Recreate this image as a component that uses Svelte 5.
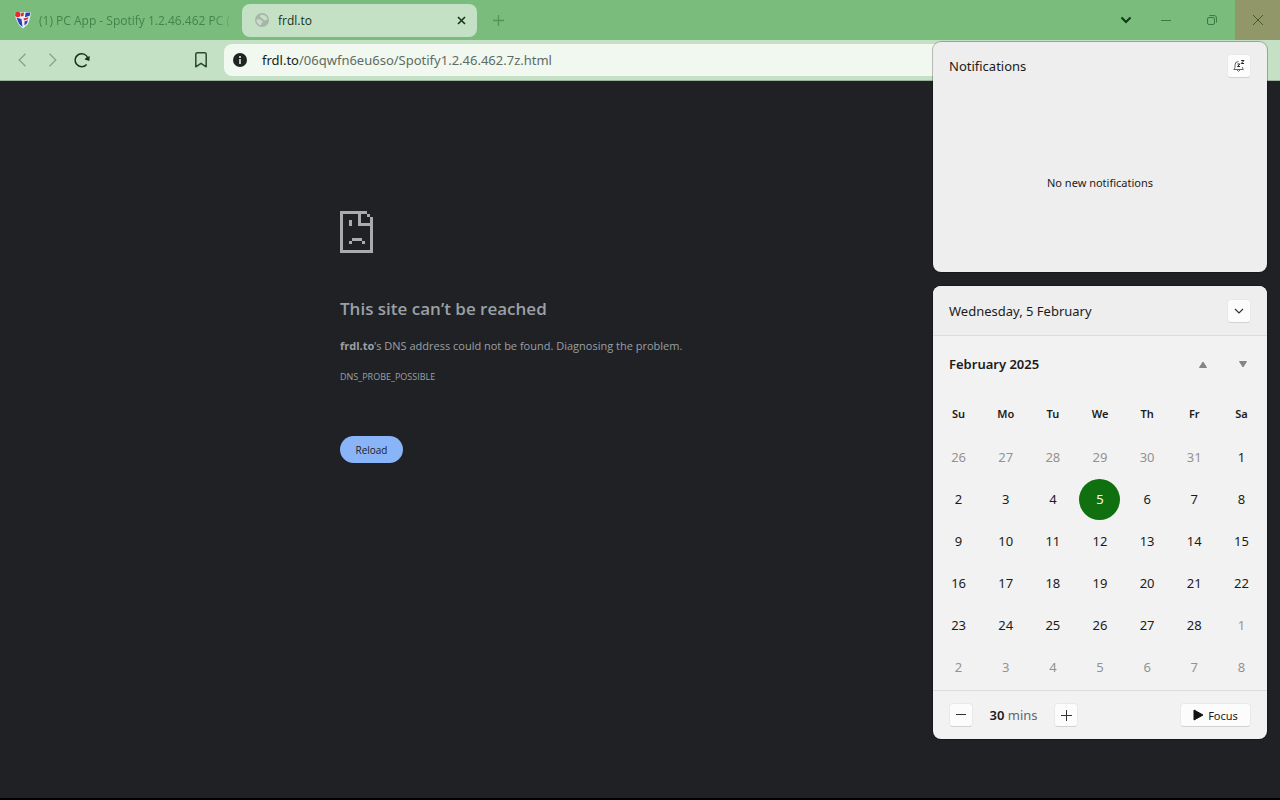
<script>
  const weekdays = ['Su', 'Mo', 'Tu', 'We', 'Th', 'Fr', 'Sa'];
  const days = [
    26, 27, 28, 29, 30, 31,
    ...Array.from({ length: 28 }, (_, i) => i + 1),
    1, 2, 3, 4, 5, 6, 7, 8
  ];
  const weeks = Array.from({ length: 6 }, (_, w) =>
    days.slice(w * 7, w * 7 + 7).map((day, d) => {
      const index = w * 7 + d;
      return { day, muted: index < 6 || index > 33, today: index === 10 };
    })
  );
  let minutes = $state(30);
</script>

<div class="browser">
  <header>
    <div class="tabs">
      <div class="tab">
        <svg width="18" height="18" viewBox="0 0 18 18" aria-hidden="true">
          <path d="M.5 2.500 3 .8 7 1.500 12 1l5 .3L16 7l-2 6-5 4.500L5 14 2 8z" fill="#eef1f8" />
          <circle cx="3.800" cy="3.500" r="2.700" fill="#e32b2b" />
          <path d="m7 2.200 3-.6-.5 3.400-2.500.5zM9.500 7.500l5-1.300-.8 2-3.700 1.300z" fill="#e32b2b" />
          <path d="m11.500 1.800 4.800-.3-.6 3.300-4.700 1.400zM2.500 6.800l5 1.200 1 8-3.300-3zM10.500 10.500l3.300-1.300-.8 3-2.500 2.300z" fill="#2440b8" />
        </svg>
        <a href="#spotify">(1) PC App - Spotify 1.2.46.462 PC (</a>
      </div>
      <div class="tab active">
        <svg width="14" height="14" viewBox="0 0 14 14" aria-hidden="true">
          <circle cx="7" cy="7" r="7" fill="#a9b4aa" />
          <path d="M1.500 6.500c2-.5 4 0 5 1 1.200.6 1.800 1.500.5 2.500-1 .5-.5 1.800-1.500 2.300C3 11.500 1.200 9.200 1.500 6.500zM5.500 2C8.500 1 11.500 3 12.500 5.500c.2 1.500-1.500 1-2 1.800C9.500 8.200 9 6.500 8 6 6.500 6 7 4.500 5.800 4.200 4.800 3.500 4.800 2.500 5.500 2z" fill="#c5dfc5" />
        </svg>
        <a href="#frdl">frdl.to</a>
        <button class="plain close" aria-label="Close tab">
          <svg width="9" height="9" viewBox="0 0 9 9"><path d="m1 1 7 7m0-7L1 8" stroke="#18351b" stroke-width="1.6" /></svg>
        </button>
      </div>
      <button class="plain new" aria-label="New tab">
        <svg width="11" height="11" viewBox="0 0 11 11"><path d="M5.500 0v11M0 5.500h11" stroke="#51955a" stroke-width="1.3" /></svg>
      </button>
      <div class="window">
        <button class="plain search" aria-label="Search tabs">
          <svg width="12" height="8" viewBox="0 0 12 8"><path d="m1.500 1.500 4.500 4.500 4.500-4.500" stroke="#123719" stroke-width="2" /></svg>
        </button>
        <button class="plain" aria-label="Minimize">
          <svg width="10" height="10" viewBox="0 0 10 10"><path d="M0 5.500h10" stroke="#397943" /></svg>
        </button>
        <button class="plain" aria-label="Restore">
          <svg width="10" height="10" viewBox="0 0 10 10"><rect x=".5" y="2.5" width="7" height="7" rx="1.500" stroke="#397943" /><path d="M2.500.5H7A2.500 2.500 0 0 1 9.500 3v4.500" stroke="#397943" /></svg>
        </button>
        <button class="plain exit" aria-label="Close window">
          <svg width="10" height="10" viewBox="0 0 10 10"><path d="m0 0 10 10M10 0 0 10" stroke="#465b35" /></svg>
        </button>
      </div>
    </div>
    <div class="toolbar">
      <button class="plain nav" aria-label="Back">
        <svg width="9" height="14" viewBox="0 0 9 14"><path d="M7.500.7 1.200 7l6.300 6.300" stroke="#86a687" stroke-width="1.3" /></svg>
      </button>
      <button class="plain nav" aria-label="Forward">
        <svg width="9" height="14" viewBox="0 0 9 14"><path d="M1.500.7 7.800 7l-6.300 6.300" stroke="#86a687" stroke-width="1.3" /></svg>
      </button>
      <button class="plain nav" aria-label="Reload page">
        <svg width="16" height="16" viewBox="0 0 16 16"><path d="M12.600 12.400A6.500 6.500 0 1 1 13.800 6" stroke="#17331c" stroke-width="1.500" /><path d="m15.700 4-.3 5-4.600-1.500q0-1 1.500-1.700z" fill="#17331c" /></svg>
      </button>
      <button class="plain mark" aria-label="Bookmark">
        <svg width="12" height="16" viewBox="0 0 12 16"><path d="M.8 14.800V2.300Q.8.800 2.300.8h7.400q1.500 0 1.500 1.500v12.500L6 11.300z" stroke="#284b2d" stroke-width="1.500" stroke-linejoin="round" /></svg>
      </button>
      <div class="address">
        <svg width="14" height="14" viewBox="0 0 14 14" aria-hidden="true"><circle cx="7" cy="7" r="7" fill="#1c2520" /><path d="M7 3v2M7 6v5" stroke="#dce8df" stroke-width="1.600" /></svg>
        <a href="#address">frdl.to<span>/06qwfn6eu6so/Spotify1.2.46.462.7z.html</span></a>
      </div>
    </div>
  </header>

  <main>
    <section class="error">
      <svg width="33" height="42" viewBox="0 0 33 42" shape-rendering="crispEdges" aria-hidden="true">
        <path fill="#a9abae" d="M0 0h27v3H0zM0 3h3v39H0zM3 39h30v3H3zM30 6h3v33h-3zM27 3h3v3h-3zM18 3h3v12h-3zM21 12h9v3h-9zM9 9h3v6H9zM12 27h10v3H12zM9 30h3v3H9zM22 30h3v3h-3z" />
      </svg>
      <h1>This site can’t be reached</h1>
      <p><strong>frdl.to</strong>’s DNS address could not be found. Diagnosing the problem.</p>
      <p class="code">DNS_PROBE_POSSIBLE</p>
      <button class="reload">Reload</button>
    </section>
  </main>

  <aside>
    <section class="card notices">
      <div class="row">
        <h2>Notifications</h2>
        <button class="square" aria-label="Do not disturb">
          <svg width="12" height="14" viewBox="0 0 12 14"><path d="M5.500 2.500Q2 2.500 2 6v2.500L.8 10.500h9.500L9.500 8.800V8M4 11q1.500 2.500 3 0" stroke="#666" /><path d="M4.500 5h2.300l-2.300 2.500H7M8.200 1.500h2.800L8.200 4.500h2.800" stroke="#222" /></svg>
        </button>
      </div>
      <p>No new notifications</p>
    </section>
    <section class="card calendar">
      <div class="row date">
        <h2>Wednesday, 5 February</h2>
        <button class="square" aria-label="Collapse calendar">
          <svg width="10" height="6" viewBox="0 0 10 6"><path d="m1 1 4 4 4-4" stroke="#333" stroke-width="1.2" /></svg>
        </button>
      </div>
      <div class="row month">
        <h2>February 2025</h2>
        <button class="plain" aria-label="Previous month">
          <svg width="8" height="7" viewBox="0 0 8 7"><path d="M4 1 7.500 6.500h-7z" fill="#858585" stroke="#858585" stroke-linejoin="round" /></svg>
        </button>
        <button class="plain" aria-label="Next month">
          <svg width="8" height="7" viewBox="0 0 8 7"><path d="M4 6 .5.5h7z" fill="#858585" stroke="#858585" stroke-linejoin="round" /></svg>
        </button>
      </div>
      <table>
        <thead><tr>{#each weekdays as name}<th scope="col">{name}</th>{/each}</tr></thead>
        <tbody>
          {#each weeks as week}
            <tr>{#each week as cell}<td class:muted={cell.muted} class:today={cell.today}><span>{cell.day}</span></td>{/each}</tr>
          {/each}
        </tbody>
      </table>
      <div class="row focus">
        <button class="square" aria-label="Less time" onclick={() => (minutes = Math.max(5, minutes - 5))}>
          <svg width="10" height="10" viewBox="0 0 10 10"><path d="M0 4.500h10" stroke="#333" /></svg>
        </button>
        <div class="time"><strong>{minutes}</strong> mins</div>
        <button class="square" aria-label="More time" onclick={() => (minutes += 5)}>
          <svg width="11" height="11" viewBox="0 0 11 11"><path d="M0 5.500h11M5.500 0v11" stroke="#333" /></svg>
        </button>
        <button class="square start">
          <svg width="11" height="12" viewBox="0 0 11 12" aria-hidden="true"><path d="M1 1v10l9-5z" fill="#111" stroke="#111" stroke-linejoin="round" /></svg>
          Focus
        </button>
      </div>
    </section>
  </aside>
</div>

<style>
  :global(body) { margin: 0; background: #202124; }
  * { box-sizing: border-box; }
  svg { display: block; flex: none; fill: none; }
  h1, h2, p { margin: 0; }
  a { color: inherit; text-decoration: none; }
  button { font: inherit; color: inherit; padding: 0; }
  .plain { display: flex; align-items: center; justify-content: center; border: 0; background: none; }

  .browser {
    position: relative;
    display: flex;
    flex-direction: column;
    min-height: 100vh;
    border-bottom: 2px solid #000;
    font-family: "Noto Sans", "Open Sans", sans-serif;
    font-size: 12px;
    color: #1b1b1b;
    background: #202124;
  }
  .tabs { display: flex; align-items: center; height: 40px; background: #79bc7c; font-family: "Open Sans", sans-serif; }
  .tab { display: flex; align-items: center; width: 235px; height: 33px; padding: 0 0 0 14px; gap: 7px; color: #43844a; }
  .tab a { flex: 1; white-space: nowrap; }
  .tab:first-child a { mask-image: linear-gradient(to right, #000 174px, transparent 196px); }
  .tab.active { margin-left: 7px; padding: 0 11px 0 13px; gap: 9px; border-radius: 8px; background: #c5e1c5; color: #17331c; }
  .close { width: 10px; height: 20px; }
  .new { width: 42px; height: 40px; }
  .window { display: flex; height: 100%; margin-left: auto; }
  .window button { width: 46px; }
  .window .search { width: 34px; }
  .window .exit { width: 45px; background: #92976a; }

  .toolbar { display: flex; align-items: center; height: 41px; padding-left: 7px; background: #c4e1c5; border-bottom: 1px solid #9bb39d; }
  .nav { width: 30px; height: 30px; }
  .mark { width: 30px; height: 30px; margin-left: 89px; }
  .address { display: flex; align-items: center; flex: 1; height: 32px; margin: 0 20px 0 8px; padding-left: 9px; gap: 15px; border-radius: 8px; background: #f0f8f0; font-size: 13px; color: #17231b; }
  .address span { color: #5f6c62; }

  main { flex: 1; padding: 130px 24px 40px; }
  .error { max-width: 600px; margin: 0 auto; font: 11px/16px "Open Sans", sans-serif; color: #9aa0a6; }
  h1 { margin: 43px 0 16px; font-size: 17px; line-height: 26px; font-weight: 600; }
  .code { margin-top: 15px; font-size: 9px; }
  .reload { width: 63px; height: 27px; margin-top: 51px; border: 0; border-radius: 14px; background: #8ab4f8; color: #202124; font: 10px "Open Sans", sans-serif; }

  aside { position: absolute; top: 42px; right: 13px; display: flex; flex-direction: column; gap: 14px; width: 334px; }
  .card { border-radius: 8px; background: #f2f2f2; box-shadow: 0 0 0 1px #00000040; overflow: hidden; }
  .row { display: flex; align-items: center; padding: 0 16px; height: 48px; }
  h2 { flex: 1; font-size: 13px; line-height: 20px; font-weight: 400; }
  .square { display: flex; align-items: center; justify-content: center; width: 24px; height: 24px; border: 1px solid #e9e9e9; border-bottom-color: #d2d2d2; border-radius: 4px; background: #fcfcfc; }
  .notices { display: flex; flex-direction: column; height: 230px; background: #eee; }
  .notices p { margin-top: 84px; text-align: center; font-size: 11px; line-height: 18px; }
  .date { height: 50px; background: #eee; border-bottom: 1px solid #dcdcdc; }
  .month { height: 56px; padding-right: 4px; }
  .month h2 { font-weight: 600; }
  .month button { width: 40px; height: 40px; }
  table { width: 330px; margin: 0 2px 2px; table-layout: fixed; border-collapse: collapse; text-align: center; font-size: 13px; }
  th { height: 44px; padding: 0 0 2px; font-size: 11px; font-weight: 600; }
  td { height: 42px; padding: 0; }
  td.muted { color: #929292; }
  td span { display: block; width: 41px; margin: 0 auto; line-height: 41px; border-radius: 50%; }
  .today span { background: #107010; color: #fff; }
  .focus { height: 49px; border-top: 1px solid #dcdcdc; }
  .time { width: 81px; text-align: center; font-size: 13px; color: #666; }
  .time strong { font-weight: 600; color: #1b1b1b; }
  .start { width: 71px; margin-left: auto; gap: 4px; font-size: 11px; }
</style>
